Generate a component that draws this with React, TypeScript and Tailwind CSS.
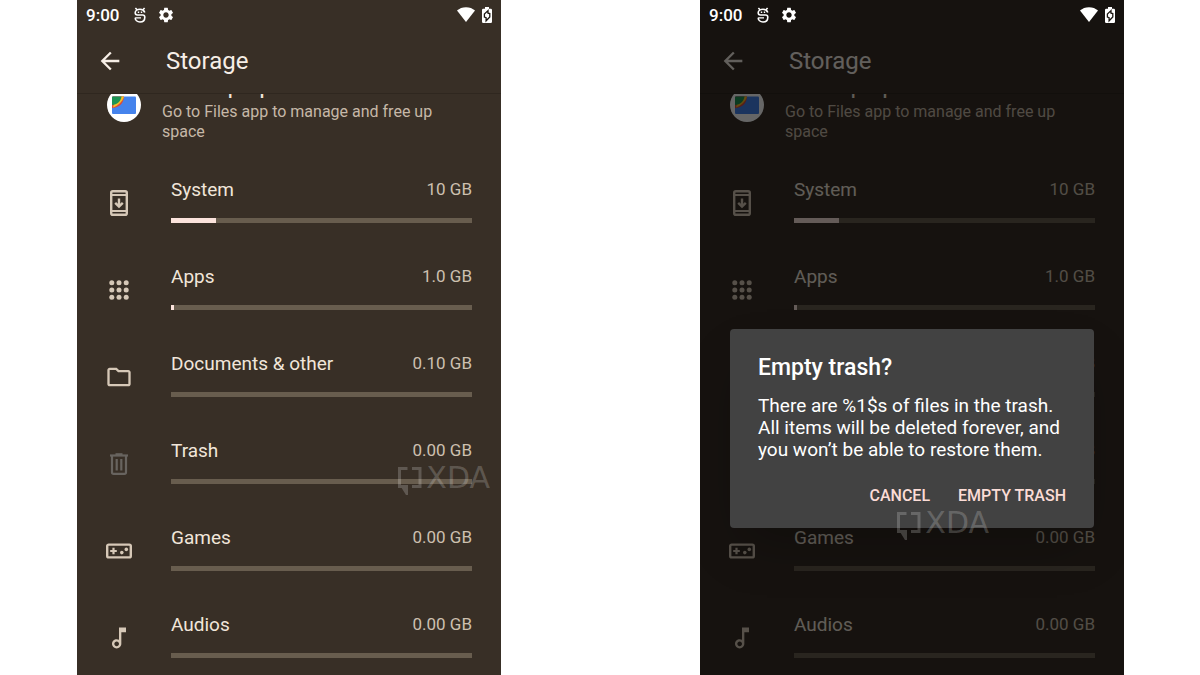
import type { ReactNode } from "react";
import { MdArrowBack, MdSettings, MdOutlineFolder, MdOutlineAudiotrack } from "react-icons/md";

interface StorageItem {
  label: string;
  size: string;
  percent: number;
  icon: ReactNode;
  muted?: boolean;
}

const SystemIcon = () => (
  <svg viewBox="0 0 18 26" className="h-[26px] w-[18px]" fill="none" stroke="currentColor">
    <rect x="1.2" y="1.2" width="15.6" height="23.6" rx="1.6" strokeWidth="2.4" />
    <path d="M2 5h14M2 21h14" strokeWidth="2" />
    <path d="M9 8.5v8M5.2 12.800L9 16.600l3.800-3.800" strokeWidth="2.400" />
  </svg>
);

const AppsIcon = () => (
  <svg viewBox="0 0 20 20" className="h-5 w-5" fill="currentColor">
    {[2.8, 10, 17.2].map((y) =>
      [2.8, 10, 17.2].map((x) => <circle key={`${x}-${y}`} cx={x} cy={y} r="2.5" />)
    )}
  </svg>
);

const TrashIcon = () => (
  <svg viewBox="0 0 20 22" className="h-[22px] w-5" fill="none" stroke="currentColor">
    <path d="M1 2.500h18" strokeWidth="2.200" />
    <path d="M6.500 1.200h7" strokeWidth="2" />
    <path d="M3 3v16.200q0 1.600 1.600 1.600h10.800q1.600 0 1.600-1.600V3" strokeWidth="2.200" />
    <path d="M7.700 6v11.500M12.300 6v11.500" strokeWidth="2.200" />
  </svg>
);

const GamesIcon = () => (
  <svg viewBox="0 0 26 16" className="h-4 w-[26px]" fill="none" stroke="currentColor">
    <rect x="1.200" y="1.600" width="23.600" height="12.800" rx="1.500" strokeWidth="2.400" />
    <path d="M7.500 4.700v6.600M4.200 8h6.600" strokeWidth="2.200" />
    <circle cx="15.800" cy="9.600" r="1.800" fill="currentColor" stroke="none" />
    <circle cx="20.300" cy="6.400" r="1.800" fill="currentColor" stroke="none" />
  </svg>
);

const items: StorageItem[] = [
  { label: "System", size: "10 GB", percent: 15, icon: <SystemIcon /> },
  { label: "Apps", size: "1.0 GB", percent: 1, icon: <AppsIcon /> },
  { label: "Documents & other", size: "0.10 GB", percent: 0, icon: <MdOutlineFolder className="h-7 w-7" /> },
  { label: "Trash", size: "0.00 GB", percent: 0, icon: <TrashIcon />, muted: true },
  { label: "Games", size: "0.00 GB", percent: 0, icon: <GamesIcon /> },
  { label: "Audios", size: "0.00 GB", percent: 0, icon: <MdOutlineAudiotrack className="h-7 w-7" /> },
];

function StatusBar() {
  return (
    <div className="relative z-20 flex h-[29px] shrink-0 items-center pl-[9px] pr-[9px] text-white">
      <span className="text-[17px] leading-5 font-medium">9:00</span>
      <svg viewBox="0 0 12 16" className="ml-[15px] h-4 w-3" fill="none" stroke="currentColor" strokeWidth="1.600">
        <path d="M1.400 1L3 2.800M10.600 1L9 2.800" />
        <path d="M10.800 5.400C10 3.200 8.300 2.200 6 2.200S1.200 3.600 1.200 5.800C1.200 7.300 2 8 3.400 8h5.200c1.500 0 2.200.8 2.200 2.200 0 2.900-2 4.800-4.800 4.800s-4.800-1.900-4.800-4.200" />
        <path d="M3.800 5.200h1.400M6.800 5.200h1.400M1.200 10.900h5.800" strokeWidth="1.400" />
      </svg>
      <MdSettings className="ml-[11px] h-[18px] w-[18px]" />
      <svg viewBox="0 0 18 15" className="ml-auto h-[15px] w-[18px]" fill="currentColor">
        <path d="M9 15L0 3.600C2.400 1.400 5.500.2 9 .2s6.600 1.200 9 3.400z" />
      </svg>
      <svg viewBox="0 0 10 16" className="ml-[7px] h-4 w-[10px]">
        <path d="M3 0h4v1.800h1.800q1.200 0 1.200 1.200v11.800q0 1.200-1.200 1.200H1.200Q0 16 0 14.800V3q0-1.200 1.200-1.200H3z" fill="currentColor" />
        <path d="M6 3.600L2.400 7v3l1.700.6v3.200L7.800 10V6.600L6 6.200z" fill="none" stroke="#1c1712" strokeWidth="1.300" />
      </svg>
    </div>
  );
}

function StorageRow({ item }: { item: StorageItem }) {
  return (
    <li className="flex items-center gap-[38px] pt-5 pr-[29px] pb-[22px] pl-7">
      <div
        className={`flex w-7 shrink-0 justify-center pt-1 ${
          item.muted ? "text-[#68645f]" : "text-[#d6c8b7]"
        }`}
      >
        {item.icon}
      </div>
      <div className="min-w-0 flex-1">
        <div className="flex items-start justify-between">
          <span className="text-[19px] leading-6 text-[#f1e6da]">{item.label}</span>
          <span className="text-[17px] leading-[22px] text-[#cdc0b0]">{item.size}</span>
        </div>
        <div
          role="progressbar"
          aria-label={item.label}
          aria-valuenow={item.percent}
          className="mt-4 h-[5px] bg-[#685d4e]"
        >
          <div className="h-full bg-[#fbe3dc]" style={{ width: `${item.percent}%` }} />
        </div>
      </div>
    </li>
  );
}

function FilesShortcut() {
  return (
    <div className="flex items-start gap-[21px] pl-[30px] pr-7 pb-4">
      <div className="mt-[15px] flex h-[34px] w-[34px] shrink-0 items-center justify-center rounded-full bg-white">
        <svg viewBox="0 0 24 18" className="h-[18px] w-6">
          <rect y="0.500" width="24" height="17.500" rx="1" fill="#4583ec" />
          <path d="M0 12V1.500q0-1 1-1h11C12 7 7 12 0 12z" fill="#dd4b3a" />
          <path d="M1 11.500C6 9.500 10.500 6 12 .5H9L2 8z" fill="#f6bf26" />
          <path d="M0 9V1.500q0-1 1-1h8.500C9 5.500 5 8.500 0 9z" fill="#1c9454" />
        </svg>
      </div>
      <div>
        <div className="text-2xl leading-6 text-[#f1e6da]">Free up space</div>
        <p className="mt-[5px] text-[16px] leading-5 text-[#c6b8a8]">
          Go to Files app to manage and free up space
        </p>
      </div>
    </div>
  );
}

function Watermark() {
  return (
    <div className="flex items-start gap-1 text-white/20">
      <svg viewBox="0 0 24 28" className="h-7 w-6" fill="none" stroke="currentColor" strokeWidth="3">
        <path d="M9.500 1.500h-8v18H8.500V26L4.500 19.500M14 1.500h8v18h-8" />
      </svg>
      <span className="font-['DejaVu_Sans'] text-[30px] leading-[22px]">XDA</span>
    </div>
  );
}

function EmptyTrashDialog() {
  return (
    <div className="absolute inset-0 z-10 flex items-start bg-black/60 px-[30px] pt-[329px]">
      <div
        role="dialog"
        aria-labelledby="dialog-title"
        className="w-full rounded-sm bg-[#424242] px-7 pt-[25px] pb-5 shadow-2xl"
      >
        <h2 id="dialog-title" className="text-[23px] leading-7 font-medium text-white">
          Empty trash?
        </h2>
        <p className="mt-[13px] text-[19px] leading-[22px] text-white">
          There are %1$s of files in the trash. All items will be deleted forever, and you won’t be able
          to restore them.
        </p>
        <div className="mt-[23px] flex justify-end gap-7 text-[16px] leading-6 font-medium text-[#fbdcd6]">
          <button type="button">CANCEL</button>
          <button type="button">EMPTY TRASH</button>
        </div>
      </div>
    </div>
  );
}

function Phone({ children }: { children?: ReactNode }) {
  return (
    <section className="relative flex min-w-0 flex-1 flex-col overflow-hidden bg-[#382f26]">
      <StatusBar />
      <header className="flex h-[65px] shrink-0 items-center border-b border-[#2f271f] pl-[19px]">
        <button type="button" aria-label="Back" className="text-[#f6eee6]">
          <MdArrowBack className="h-7 w-7" />
        </button>
        <h1 className="ml-[42px] text-2xl leading-7 text-[#f6eee6]">Storage</h1>
      </header>
      <div className="min-h-0 flex-1 overflow-hidden">
        {/* list is scrolled a little under the header */}
        <div className="-mt-[21px]">
          <FilesShortcut />
          <ul>
            {items.map((item) => (
              <StorageRow key={item.label} item={item} />
            ))}
          </ul>
        </div>
      </div>
      {children}
    </section>
  );
}

export default function App() {
  return (
    <main className="flex h-screen gap-[199px] bg-white pl-[77px] pr-[76px] font-[Roboto,sans-serif]">
      <Phone>
        <div className="absolute top-[467px] right-[11px]">
          <Watermark />
        </div>
      </Phone>
      <Phone>
        <EmptyTrashDialog />
        <div className="absolute top-[512px] right-[135px] z-20">
          <Watermark />
        </div>
      </Phone>
    </main>
  );
}
